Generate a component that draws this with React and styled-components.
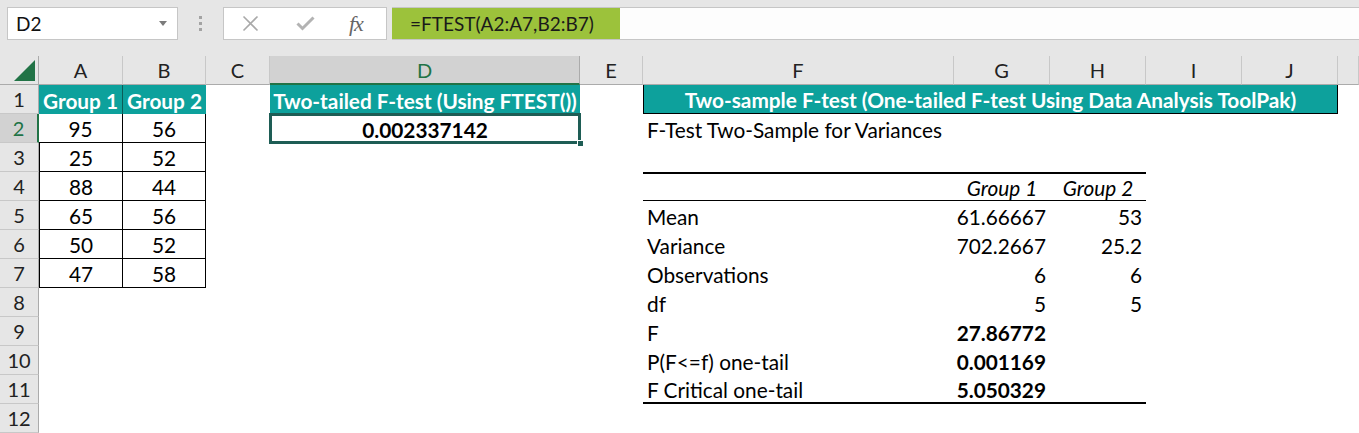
import React from "react";
import styled, { createGlobalStyle } from "styled-components";

const GlobalStyle = createGlobalStyle`
  html, body {
    margin: 0;
    padding: 0;
    background: #ffffff;
    overflow: hidden;
  }
  body {
    font-family: "Lato", "Liberation Sans", sans-serif;
    color: #000;
  }
`;

const LETTERS = ["A", "B", "C", "D", "E", "F", "G", "H", "I", "J", ""];
const TEAL = "#0da19c";
const XL_GREEN = "#217346";

const Page = styled.div`
  width: 1359px;
  height: 433px;
  display: flex;
  flex-direction: column;
`;

/* ---------- formula bar ---------- */

const FormulaBar = styled.div`
  height: 56px;
  box-sizing: border-box;
  background: #e6e6e6;
  display: flex;
  align-items: flex-start;
  padding: 7px 0 0 7px;
`;

const NameBox = styled.div`
  width: 171px;
  height: 33px;
  box-sizing: border-box;
  background: #fff;
  border: 1px solid #c6c6c6;
  display: flex;
  align-items: center;
  justify-content: space-between;
  padding: 0 10px 0 8px;
  font-size: 19px;
  color: #111;
`;

const DropArrow = styled.span`
  width: 0;
  height: 0;
  border-left: 4px solid transparent;
  border-right: 4px solid transparent;
  border-top: 5px solid #7b7b7b;
`;

const Dots = styled.div`
  width: 45px;
  height: 33px;
  display: flex;
  flex-direction: column;
  align-items: center;
  justify-content: center;
  gap: 3px;
  span {
    width: 3px;
    height: 3px;
    background: #a3a3a3;
  }
`;

const FxBox = styled.div`
  width: 164px;
  height: 33px;
  box-sizing: border-box;
  background: #fff;
  border: 1px solid #c6c6c6;
  display: flex;
  align-items: center;
  padding-left: 18px;
  gap: 37px;
`;

const FxText = styled.span`
  font-family: "Liberation Serif", "DejaVu Serif", serif;
  font-style: italic;
  font-size: 22px;
  color: #666;
  letter-spacing: -1px;
  margin-left: -3px;
`;

const FormulaInput = styled.div`
  flex: 1;
  height: 33px;
  margin-left: 5px;
  box-sizing: border-box;
  background: #fdfdfd;
  border-top: 1px solid #c6c6c6;
  border-bottom: 1px solid #c6c6c6;
  display: flex;
`;

const Highlight = styled.div`
  width: 228px;
  height: 100%;
  background: #9cc23b;
  display: flex;
  align-items: center;
  padding-left: 18px;
  box-sizing: border-box;
  font-size: 19px;
  color: #1a1a1a;
`;

/* ---------- sheet ---------- */

const Sheet = styled.div`
  display: grid;
  grid-template-columns: 39px 84px 83px 64px 310px 63px 311px 96px 96px 96px 96px 1fr;
  grid-template-rows: repeat(13, 29px);
  font-size: 20.8px;
`;

const Corner = styled.div`
  grid-column: 1;
  grid-row: 1;
  background: #e6e6e6;
  border-right: 1px solid #ababab;
  border-bottom: 1px solid #ababab;
  box-sizing: border-box;
  position: relative;
  svg {
    position: absolute;
    right: 3px;
    bottom: 3px;
  }
`;

const ColHead = styled.div`
  grid-row: 1;
  grid-column: ${(p) => p.$col + 1};
  background: ${(p) => (p.$active ? "#d2d2d2" : "#e6e6e6")};
  color: ${(p) => (p.$active ? XL_GREEN : "#222")};
  border-right: 1px solid ${(p) => (p.$active ? "#ababab" : "#c8c8c8")};
  border-bottom: ${(p) => (p.$active ? `2px solid ${XL_GREEN}` : "1px solid #ababab")};
  box-sizing: border-box;
  display: flex;
  align-items: center;
  justify-content: center;
  font-size: 20px;
`;

const RowHead = styled.div`
  grid-column: 1;
  grid-row: ${(p) => p.$row + 1};
  background: ${(p) => (p.$active ? "#d2d2d2" : "#e6e6e6")};
  color: ${(p) => (p.$active ? XL_GREEN : "#222")};
  border-right: ${(p) => (p.$active ? `2px solid ${XL_GREEN}` : "1px solid #ababab")};
  border-bottom: 1px solid #c8c8c8;
  box-sizing: border-box;
  display: flex;
  align-items: center;
  justify-content: center;
  font-size: 20px;
`;

const Cell = styled.div`
  grid-column: ${(p) => p.$col + 1} / span ${(p) => p.$span || 1};
  grid-row: ${(p) => p.$row + 1};
  box-sizing: border-box;
  display: flex;
  align-items: center;
  justify-content: ${(p) =>
    p.$align === "left" ? "flex-start" : p.$align === "right" ? "flex-end" : "center"};
  padding: 1px 4px 0;
  white-space: nowrap;
  position: relative;
  background: ${(p) => (p.$head ? TEAL : "transparent")};
  color: ${(p) => (p.$head ? "#fff" : "#000")};
  font-weight: ${(p) => (p.$bold || p.$head ? 700 : 400)};
  font-style: ${(p) => (p.$italic ? "italic" : "normal")};
  border-top: ${(p) => p.$bt || "none"};
  border-right: ${(p) => p.$br || "none"};
  border-bottom: ${(p) => p.$bb || "none"};
  border-left: ${(p) => p.$bl || "none"};
`;

const Selected = styled(Cell)`
  box-shadow: 0 0 0 1px #1e5d55, inset 0 0 0 2px #1e5d55;
  &::after {
    content: "";
    position: absolute;
    right: -4px;
    bottom: -4px;
    width: 5px;
    height: 5px;
    background: #1e5d55;
    border: 1px solid #fff;
  }
`;

const thin = "1px solid #000";
const thick = "2px solid #000";

const groups = [
  [95, 56],
  [25, 52],
  [88, 44],
  [65, 56],
  [50, 52],
  [47, 58],
];

const stats = [
  { label: "Mean", g1: "61.66667", g2: "53" },
  { label: "Variance", g1: "702.2667", g2: "25.2" },
  { label: "Observations", g1: "6", g2: "6" },
  { label: "df", g1: "5", g2: "5" },
  { label: "F", g1: "27.86772", bold: true },
  { label: "P(F<=f) one-tail", g1: "0.001169", bold: true },
  { label: "F Critical one-tail", g1: "5.050329", bold: true },
];

function XIcon() {
  return (
    <svg width="17" height="17" viewBox="0 0 17 17">
      <path d="M1.5 1.5 L15.5 15.5 M15.5 1.5 L1.5 15.5" stroke="#a9a9a9" strokeWidth="1.6" fill="none" />
    </svg>
  );
}

function CheckIcon() {
  return (
    <svg width="19" height="15" viewBox="0 0 19 15">
      <path d="M1.5 7.5 L6.5 12.5 L17.5 1.5" stroke="#b3b3b3" strokeWidth="3" fill="none" />
    </svg>
  );
}

export default function App() {
  return (
    <Page>
      <GlobalStyle />
      <FormulaBar>
        <NameBox>
          <span>D2</span>
          <DropArrow />
        </NameBox>
        <Dots>
          <span />
          <span />
          <span />
        </Dots>
        <FxBox>
          <XIcon />
          <CheckIcon />
          <FxText>fx</FxText>
        </FxBox>
        <FormulaInput>
          <Highlight>=FTEST(A2:A7,B2:B7)</Highlight>
        </FormulaInput>
      </FormulaBar>

      <Sheet>
        <Corner>
          <svg width="21" height="21" viewBox="0 0 21 21">
            <polygon points="21,0 21,21 0,21" fill="#217346" />
          </svg>
        </Corner>
        {LETTERS.map((l, i) => (
          <ColHead key={i} $col={i + 1} $active={l === "D"}>
            {l}
          </ColHead>
        ))}
        {Array.from({ length: 12 }, (_, i) => (
          <RowHead key={i} $row={i + 1} $active={i === 1}>
            {i + 1}
          </RowHead>
        ))}

        {/* group data */}
        <Cell $col={1} $row={1} $head $br={"1px solid #0b5c58"}>Group 1</Cell>
        <Cell $col={2} $row={1} $head>Group 2</Cell>
        {groups.map(([a, b], i) => (
          <React.Fragment key={i}>
            <Cell $col={1} $row={i + 2} $bl={i === 0 ? "none" : thin} $br={thin} $bb={thin}>
              {a}
            </Cell>
            <Cell $col={2} $row={i + 2} $br={thin} $bb={thin}>
              {b}
            </Cell>
          </React.Fragment>
        ))}

        {/* FTEST */}
        <Cell $col={4} $row={1} $head>Two-tailed F-test (Using FTEST())</Cell>
        <Selected $col={4} $row={2} $bold>0.002337142</Selected>

        {/* toolpak */}
        <Cell $col={6} $row={1} $span={5} $head $bl={thin} $br={thin} $bb={thin}>
          Two-sample F-test (One-tailed F-test Using Data Analysis ToolPak)
        </Cell>
        <Cell $col={6} $row={2} $align="left">F-Test Two-Sample for Variances</Cell>

        <Cell $col={6} $row={4} $bt={thick} $bb={thin} />
        <Cell $col={7} $row={4} $italic $bt={thick} $bb={thin}>Group 1</Cell>
        <Cell $col={8} $row={4} $italic $bt={thick} $bb={thin}>Group 2</Cell>

        {stats.map((s, i) => {
          const last = i === stats.length - 1;
          const bb = last ? thick : "none";
          return (
            <React.Fragment key={s.label}>
              <Cell $col={6} $row={i + 5} $align="left" $bb={bb}>{s.label}</Cell>
              <Cell $col={7} $row={i + 5} $align="right" $bold={s.bold} $bb={bb}>{s.g1}</Cell>
              <Cell $col={8} $row={i + 5} $align="right" $bb={bb}>{s.g2 || ""}</Cell>
            </React.Fragment>
          );
        })}
      </Sheet>
    </Page>
  );
}
